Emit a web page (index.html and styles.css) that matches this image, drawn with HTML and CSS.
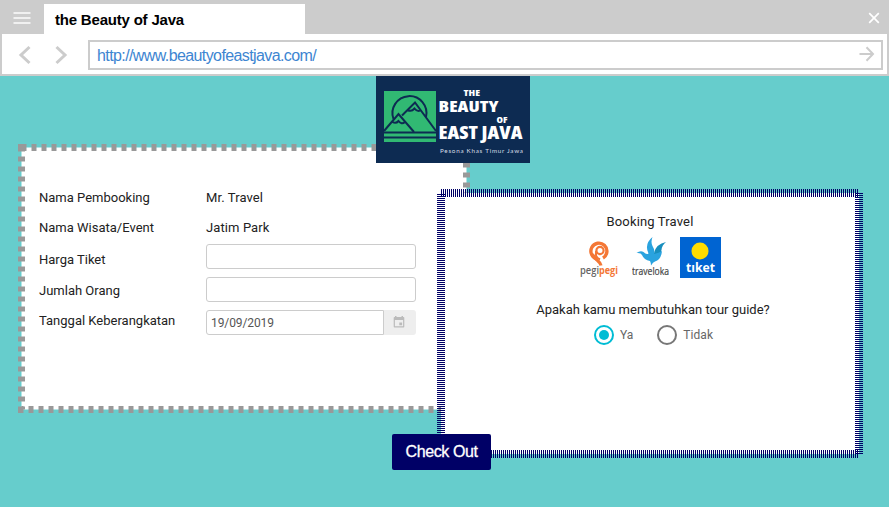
FILE: index.html
```html
<!DOCTYPE html>
<html lang="id">
<head>
<meta charset="utf-8">
<title>the Beauty of Java</title>
<link rel="stylesheet" href="styles.css">
</head>
<body>
<header class="titlebar">
  <svg class="menu" width="18" height="14" viewBox="0 0 18 14"><path d="M0.5 2h17M0.5 7h17M0.5 12h17" stroke="#f0f0f0" stroke-width="2"/></svg>
  <div class="tab">the Beauty of Java</div>
  <svg class="close" width="12" height="12" viewBox="0 0 12 12"><path d="M1.2 1.2l9.6 9.6M10.8 1.2l-9.6 9.6" stroke="#fff" stroke-width="1.7"/></svg>
</header>
<nav class="toolbar">
  <svg class="nav-icon" width="14" height="20" viewBox="0 0 14 20"><path d="M11.5 2L3 10l8.5 8" fill="none" stroke="#ccc" stroke-width="3"/></svg>
  <svg class="nav-icon" width="14" height="20" viewBox="0 0 14 20"><path d="M2.5 2L11 10l-8.5 8" fill="none" stroke="#ccc" stroke-width="3"/></svg>
  <div class="address">
    <span>http://www.beautyofeastjava.com/</span>
    <svg width="16" height="16" viewBox="0 0 16 16"><path d="M0.5 8h13M7.5 1.2l6.5 6.8l-6.5 6.8" fill="none" stroke="#ccc" stroke-width="2"/></svg>
  </div>
</nav>
<main class="page">
  <svg class="brand" width="154" height="87" viewBox="0 0 154 87">
    <rect width="154" height="87" fill="#0d2b52"/>
    <rect x="8" y="15" width="52" height="51" fill="#31b973"/>
    <g fill="none" stroke="#0d2b52" stroke-width="2">
      <path d="M17.500 43A17 17 0 1 1 50 41"/>
      <path d="M8 55l14.500-17L38 56M26 39.500L39 26.500L60 55M16.500 46q3.500 2 6-1q3 4 6.500 1M31.500 34q4 2 7-1.500q3 4 7 1.500"/>
      <path d="M8 56.500h52M8 61.500h52"/>
    </g>
    <g class="brand-name">
      <text x="87.500" y="20" font-size="9.500" textLength="16.500" lengthAdjust="spacingAndGlyphs">THE</text>
      <text x="62.500" y="35.500" font-size="16.500" textLength="60" lengthAdjust="spacingAndGlyphs">BEAUTY</text>
      <text x="120.500" y="47" font-size="9" textLength="11" lengthAdjust="spacingAndGlyphs">OF</text>
      <text x="62.500" y="63" font-size="17" textLength="84" lengthAdjust="spacingAndGlyphs">EAST JAVA</text>
    </g>
    <text x="64" y="76.500" font-size="6.300" fill="#d5dce5" font-family="Lato, sans-serif" textLength="83">Pesona Khas Timur Jawa</text>
  </svg>
  <div class="panels">
    <section class="panel booking">
      <svg class="frame" width="452" height="269"><rect x="3.5" y="3.5" width="445" height="262" fill="#fff" stroke="#999" stroke-width="7" stroke-dasharray="5 5"/></svg>
      <div class="fields">
        <div class="label">Nama Pembooking</div><div class="value">Mr. Travel</div>
        <div class="label">Nama Wisata/Event</div><div class="value">Jatim Park</div>
        <div class="label">Harga Tiket</div><div class="input"></div>
        <div class="label raised">Jumlah Orang</div><div class="input"></div>
        <div class="label top">Tanggal Keberangkatan</div>
        <div class="date">
          <div class="input">19/09/2019</div>
          <div class="picker"><svg width="12" height="12" viewBox="0 0 12 12"><path fill="#bbb" fill-rule="evenodd" d="M2 0h1.500v1h5V0H10v1h.5q.8 0 .8.800v8.900q0 .8-.8.800h-9q-.8 0-.8-.8V1.800Q.7 1 1.500 1H2zM1.900 4v6.300h8.200V4zM6.300 6.500h2.800v2.800H6.300z"/></svg></div>
        </div>
      </div>
    </section>
    <section class="panel travel">
      <svg class="frame" width="426" height="269"><rect x="4" y="4" width="418" height="261" fill="#fff" stroke="#006" stroke-width="8" stroke-dasharray="1 1"/></svg>
      <div class="heading">Booking Travel</div>
      <div class="partners">
        <svg width="40" height="41" viewBox="0 0 40 41">
          <g fill="none" stroke="#f47735">
            <path d="M17.500 22A8 8 0 1 1 23 21" stroke-width="3.400"/>
            <path d="M12.500 17q1.500 4 5 6.500q3 2.500 3.500 5" stroke-width="3.200"/>
            <circle cx="20" cy="13.500" r="3.600" stroke-width="2.200"/>
            <path d="M16 14v4.500q1 2.500 4 4" stroke-width="2"/>
          </g>
          <text x="0" y="37" font-family="Open Sans, sans-serif" font-weight="600" font-size="10" fill="#666" textLength="19" lengthAdjust="spacingAndGlyphs">pegi</text>
          <text x="19" y="37" font-family="Open Sans, sans-serif" font-weight="700" font-size="10" fill="#f47735" textLength="19" lengthAdjust="spacingAndGlyphs">pegi</text>
        </svg>
        <svg width="40" height="41" viewBox="0 0 40 41">
          <path fill="#188ebd" d="M22 16q2-9 12-11q-4 3-4.500 8q-1 7-7.500 9z"/>
          <path fill="#2aa3df" d="M20.500 0q-2 5 0 9q3 5 1.500 8q5-1 8-3q-1 9-7 10.500q-2 .5-4 4q0-3-1-4.500q-6-1-8-6q-1-2.500-5.500-2q4-3 7-1q3 3 5 1.500Q12 7 20.500 0z"/>
          <text x="0" y="38" font-family="Open Sans, sans-serif" font-size="10" fill="#444" stroke="#444" stroke-width=".2" textLength="37" lengthAdjust="spacingAndGlyphs">traveloka</text>
        </svg>
        <svg width="41" height="41" viewBox="0 0 41 41">
          <rect width="41" height="41" fill="#0064d2"/><circle cx="20" cy="14" r="8.500" fill="#ffdc00"/>
          <text x="6" y="35" font-family="Open Sans, sans-serif" font-weight="700" font-size="13" fill="#fff" textLength="29" lengthAdjust="spacingAndGlyphs">tıket</text>
        </svg>
      </div>
      <div class="question">Apakah kamu membutuhkan tour guide?</div>
      <div class="choices">
        <div class="choice selected"><span class="radio"></span>Ya</div>
        <div class="choice"><span class="radio"></span>Tidak</div>
      </div>
    </section>
  </div>
  <button class="checkout">Check Out</button>
</main>
</body>
</html>
```
FILE: styles.css
```css
* { box-sizing: border-box; }
body {
  margin: 0;
  width: 889px;
  height: 507px;
  overflow: hidden;
  background: #66cdcc;
  color: #222;
  font: 13px/16px Roboto, sans-serif;
}
svg { display: block; flex: none; }
.titlebar {
  display: flex;
  height: 34px;
  padding: 4px 8px 0 13px;
  background: #ccc;
}
.menu { margin: 7px 13px 0 0; }
.tab {
  width: 261px;
  padding-left: 11px;
  background: #fff;
  color: #000;
  font: bold 15px/31px "Liberation Sans", sans-serif;
  letter-spacing: -.2px;
}
.close { margin: 8px 1px 0 auto; }
.toolbar {
  display: flex;
  height: 42px;
  padding: 6px 4px 4px 16px;
  border: solid #ccc;
  border-width: 0 2px 2px;
  background: #fff;
}
.nav-icon { margin-top: 5px; }
.nav-icon + .nav-icon { margin: 5px 20px 0 22px; }
.address {
  display: flex;
  flex: 1;
  justify-content: space-between;
  height: 30px;
  padding: 0 6px 0 7px;
  border: 2px solid #ccc;
  color: #3d85d1;
  font: 16px/28px "Liberation Sans", sans-serif;
  letter-spacing: -.6px;
}
.address svg { margin-top: 4px; }
.page { display: flex; flex-direction: column; }
.brand { position: relative; z-index: 2; margin-left: 376px; }
.brand-name {
  fill: #fff;
  font-family: "Open Sans", sans-serif;
  font-weight: 800;
  font-stretch: 75%;
}
.panels { display: flex; margin: -19px 0 0 18px; }
.panel { position: relative; flex: none; }
.frame { position: absolute; z-index: 0; top: 0; left: 0; }
.booking { width: 452px; height: 269px; padding: 38px 0 0 21px; }
.fields {
  position: relative;
  display: grid;
  grid-template-columns: 167px 210px;
  grid-template-rows: 30px 32px 33px 33px 25px;
}
.label, .value { padding-top: 8px; }
.value { letter-spacing: .1px; }
.label { white-space: nowrap; }
.label.raised { padding-top: 6px; }
.label.top { padding-top: 3px; }
.input {
  height: 25px;
  border: 1px solid #ccc;
  border-radius: 3px;
  background: #fff;
}
.date { display: flex; }
.date .input {
  width: 178px;
  padding-left: 4px;
  border-radius: 3px 0 0 3px;
  color: #555;
  font-size: 12px;
  line-height: 24px;
  letter-spacing: -.1px;
}
.picker {
  width: 32px;
  padding: 6px 0 0 9px;
  border-radius: 0 3px 3px 0;
  background: #eee;
}
.travel {
  display: flex;
  flex-direction: column;
  align-items: center;
  width: 426px;
  height: 269px;
  margin: 45px 0 0 -33px;
  padding-top: 25px;
}
.heading, .partners, .question, .choices { position: relative; }
.heading { letter-spacing: .15px; }
.partners { display: flex; gap: 12px; margin: 7px 0 0 1px; height: 41px; }
.partners svg + svg + svg { margin-left: -4px; }
.question { margin-top: 24px; margin-left: 6px; }
.choices { display: flex; gap: 24px; margin: 7px 0 0 7px; }
.choice { display: flex; align-items: center; gap: 6px; height: 20px; color: #666; font-size: 12px; letter-spacing: .05px; }
.radio {
  display: grid;
  place-items: center;
  width: 20px;
  height: 20px;
  border: 2px solid #777;
  border-radius: 50%;
}
.selected .radio { border-color: #00bcd4; }
.selected .radio::after { content: ""; width: 10px; height: 10px; border-radius: 50%; background: #00bcd4; }
.checkout {
  position: relative;
  z-index: 2;
  width: 99px;
  height: 36px;
  margin: -24px 0 0 392px;
  padding: 0;
  border: 0;
  border-radius: 2px;
  background: #006;
  color: #fff;
  font: 16px/36px "Liberation Sans", sans-serif;
  letter-spacing: -.4px;
  -webkit-text-stroke: .3px #fff;
}
```
